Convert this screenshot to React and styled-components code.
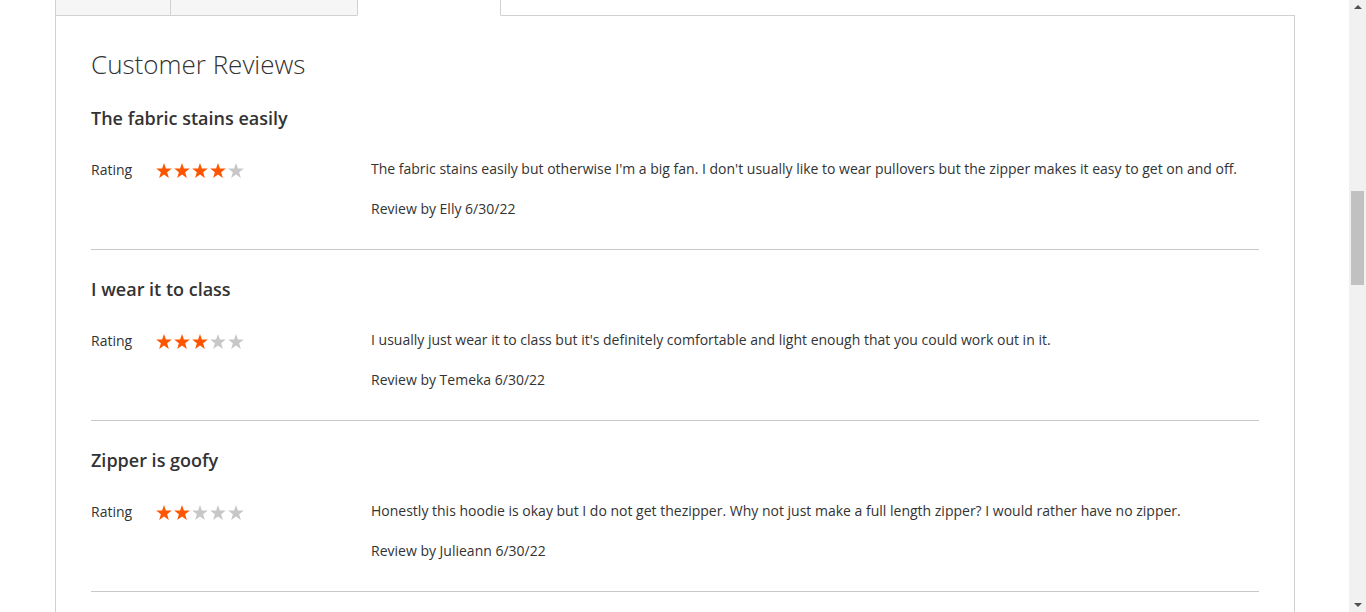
import React from "react";
import styled, { createGlobalStyle } from "styled-components";

const Global = createGlobalStyle`
  html, body { margin: 0; padding: 0; height: 100%; overflow: hidden; background: #fff; }
  body { font-family: "Open Sans", "Liberation Sans", sans-serif; color: #333; font-size: 14px; }
  * { box-sizing: border-box; }
`;

const Page = styled.div`
  display: flex;
  width: 1366px;
  height: 612px;
  overflow: hidden;
`;

const Main = styled.div`
  flex: 1;
  padding: 0 54px 0 55px;
  overflow: hidden;
`;

const TabRow = styled.div`
  display: flex;
  align-items: stretch;
  margin-top: -20px;
  height: 36px;
`;

const Tab = styled.div`
  width: ${(p) => p.$w}px;
  flex: none;
  padding: 0 20px;
  line-height: 18px;
  font-size: 18px;
  font-weight: 600;
  white-space: nowrap;
  overflow: hidden;
  color: ${(p) => (p.$active ? "#333" : "#7d7d7d")};
  background: ${(p) => (p.$active ? "#fff" : "#f6f6f6")};
  border-left: 1px solid #d1d1d1;
  border-top: 1px solid #d1d1d1;
  border-right: ${(p) => (p.$last ? "1px solid #d1d1d1" : "none")};
  border-bottom: ${(p) => (p.$active ? "1px solid transparent" : "1px solid #d1d1d1")};
`;

const TabFill = styled.div`
  flex: 1;
  border-bottom: 1px solid #d1d1d1;
`;

const Panel = styled.div`
  border: 1px solid #d1d1d1;
  border-top: none;
  padding: 35px 35px 40px;
  min-height: 700px;
`;

const Heading = styled.h2`
  margin: 0 0 2px;
  font-size: 26px;
  line-height: 26px;
  font-weight: 300;
  color: #333;
`;

const ReviewList = styled.ol`
  list-style: none;
  margin: 0;
  padding: 0;
`;

const ReviewItem = styled.li`
  padding: 29px 0 30px;
  border-bottom: 1px solid #c9c9c9;
`;

const ReviewTitle = styled.div`
  font-size: 18px;
  font-weight: 600;
  line-height: 20px;
  margin-bottom: 31px;
`;

const ReviewBody = styled.div`
  display: flex;
`;

const Ratings = styled.div`
  width: 280px;
  flex: none;
  display: flex;
  align-items: center;
  height: 20px;
`;

const RatingLabel = styled.span`
  width: 65px;
  font-size: 14px;
  line-height: 20px;
  padding-top: 2px;
`;

const Stars = styled.span`
  display: flex;
  gap: 2px;
  padding-top: 2px;
`;

const Content = styled.div`
  flex: 1;
`;

const Text = styled.p`
  margin: 0 0 20px;
  font-size: 14px;
  line-height: 20px;
`;

const Details = styled.p`
  margin: 0;
  font-size: 14px;
  line-height: 20px;
`;

const Scrollbar = styled.div`
  width: 17px;
  flex: none;
  background: #f1f1f1;
  display: flex;
  flex-direction: column;
  align-items: center;
`;

const Arrow = styled.div`
  width: 0;
  height: 0;
  border-left: 4px solid transparent;
  border-right: 4px solid transparent;
  ${(p) =>
    p.$down
      ? "border-top: 4px solid #505050; margin-bottom: 5px;"
      : "border-bottom: 4px solid #505050; margin-top: 5px;"}
`;

const Track = styled.div`
  flex: 1;
  width: 100%;
  display: flex;
  justify-content: center;
`;

const Thumb = styled.div`
  margin-top: 182px;
  width: 13px;
  height: 94px;
  background: #c1c1c1;
`;

const Star = ({ on }) => (
  <svg width="16" height="15" viewBox="0 0 24 23">
    <path
      d="M12 0 L14.9 8.4 L24 8.6 L16.8 14.1 L19.4 23 L12 17.7 L4.6 23 L7.2 14.1 L0 8.6 L9.1 8.4 Z"
      fill={on ? "#ff5501" : "#c7c7c7"}
    />
  </svg>
);

const reviews = [
  {
    title: "The fabric stains easily",
    rating: 4,
    text: "The fabric stains easily but otherwise I'm a big fan. I don't usually like to wear pullovers but the zipper makes it easy to get on and off.",
    by: "Elly",
  },
  {
    title: "I wear it to class",
    rating: 3,
    text: "I usually just wear it to class but it's definitely comfortable and light enough that you could work out in it.",
    by: "Temeka",
  },
  {
    title: "Zipper is goofy",
    rating: 2,
    text: "Honestly this hoodie is okay but I do not get thezipper. Why not just make a full length zipper? I would rather have no zipper.",
    by: "Julieann",
  },
  {
    title: "Great hoodie",
    rating: 5,
    text: "Comfortable and warm.",
    by: "Sam",
  },
];

export default function App() {
  return (
    <>
      <Global />
      <Page>
        <Main>
          <TabRow>
            <Tab $w={115}>Details</Tab>
            <Tab $w={187}>More Information</Tab>
            <Tab $w={144} $active $last>Reviews (3)</Tab>
            <TabFill />
          </TabRow>
          <Panel>
            <Heading>Customer Reviews</Heading>
            <ReviewList>
              {reviews.map((r) => (
                <ReviewItem key={r.title}>
                  <ReviewTitle>{r.title}</ReviewTitle>
                  <ReviewBody>
                    <Ratings>
                      <RatingLabel>Rating</RatingLabel>
                      <Stars>
                        {[1, 2, 3, 4, 5].map((i) => (
                          <Star key={i} on={i <= r.rating} />
                        ))}
                      </Stars>
                    </Ratings>
                    <Content>
                      <Text>{r.text}</Text>
                      <Details>Review by {r.by} 6/30/22</Details>
                    </Content>
                  </ReviewBody>
                </ReviewItem>
              ))}
            </ReviewList>
          </Panel>
        </Main>
        <Scrollbar>
          <Arrow />
          <Track>
            <Thumb />
          </Track>
          <Arrow $down />
        </Scrollbar>
      </Page>
    </>
  );
}
